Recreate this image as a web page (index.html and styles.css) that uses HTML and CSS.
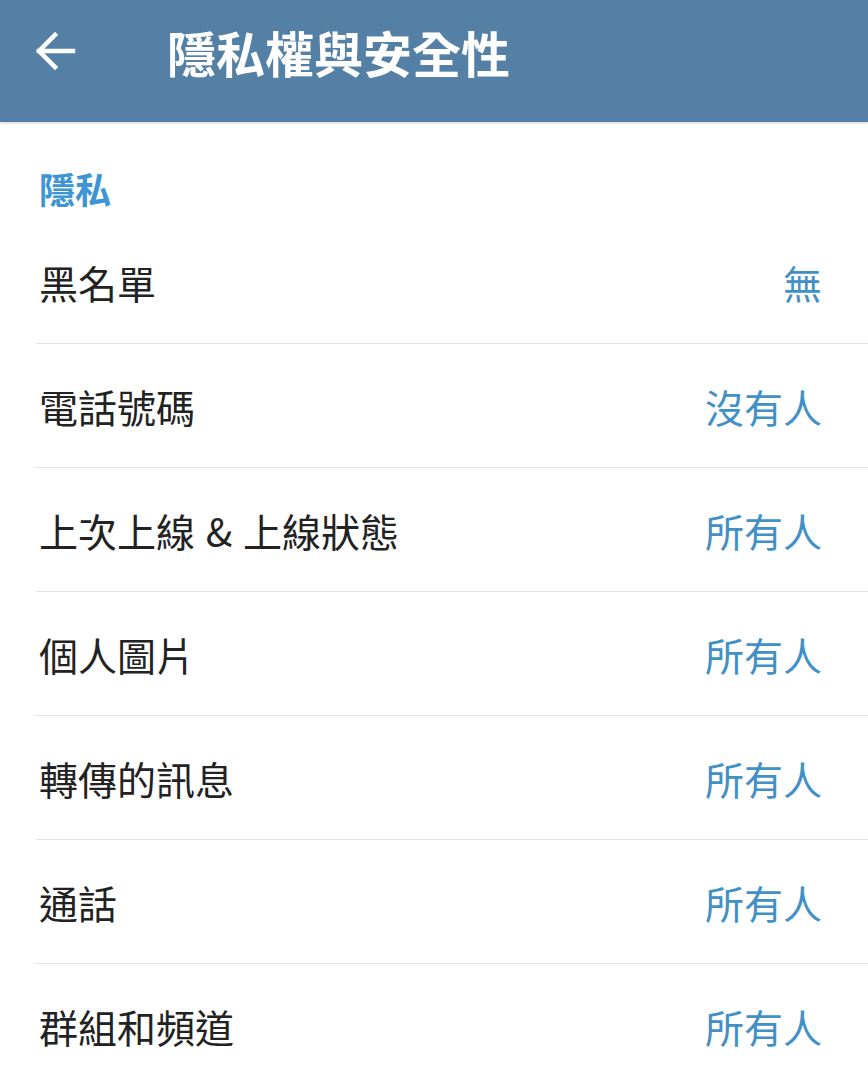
FILE: index.html
```html
<!DOCTYPE html>
<html lang="zh-Hant">
<head>
    <meta charset="UTF-8">
    <meta name="viewport" content="width=device-width, initial-scale=1.0">
    <title>隱私權與安全性</title>
    <link rel="stylesheet" href="styles.css">
</head>
<body>
    <header class="topbar">
        <button class="back-btn" aria-label="返回">
            <svg width="44" height="44" viewBox="0 0 44 44">
                <path d="M40 22H6M22 6L6 22l16 16" fill="none" stroke="#fff" stroke-width="4.5" stroke-linecap="square"/>
            </svg>
        </button>
        <h1>隱私權與安全性</h1>
    </header>

    <div class="section-title">隱私</div>
    <ul class="settings">
        <li><span>黑名單</span><span class="value">無</span></li>
        <li><span>電話號碼</span><span class="value">沒有人</span></li>
        <li><span>上次上線 &amp; 上線狀態</span><span class="value">所有人</span></li>
        <li><span>個人圖片</span><span class="value">所有人</span></li>
        <li><span>轉傳的訊息</span><span class="value">所有人</span></li>
        <li><span>通話</span><span class="value">所有人</span></li>
        <li><span>群組和頻道</span><span class="value">所有人</span></li>
    </ul>
</body>
</html>
```

FILE: styles.css
```css
body {
    margin: 0;
    padding: 0;
    background-color: #fff;
    font-family: "Noto Sans CJK TC", "Noto Sans", sans-serif;
    overflow: hidden;
}

.topbar {
    box-sizing: border-box;
    height: 122px;
    padding-bottom: 20px;
    background-color: #5580a6;
    display: flex;
    align-items: center;
    box-shadow: 0 1px 3px rgba(0, 0, 0, 0.2);
    position: relative;
}

.back-btn {
    background: none;
    border: none;
    padding: 0;
    margin-left: 33px;
    width: 44px;
    height: 44px;
    display: flex;
}

.topbar h1 {
    margin: 0 0 0 90px;
    color: #fff;
    font-size: 49px;
    font-weight: bold;
    line-height: 1;
}

.section-title {
    margin: 46px 0 0 39px;
    padding-bottom: 11px;
    color: #3d95d4;
    font-size: 36px;
    font-weight: bold;
    line-height: 41px;
}

.settings {
    list-style: none;
    margin: 0 0 0 36px;
    padding: 0;
}

.settings li {
    height: 123px;
    border-bottom: 1px solid #e2e2e2;
    display: flex;
    align-items: center;
    justify-content: space-between;
    padding: 0 46px 0 3px;
    font-size: 39px;
    word-spacing: 2px;
    color: #222;
}

.settings .value {
    color: #4190c6;
}
```
